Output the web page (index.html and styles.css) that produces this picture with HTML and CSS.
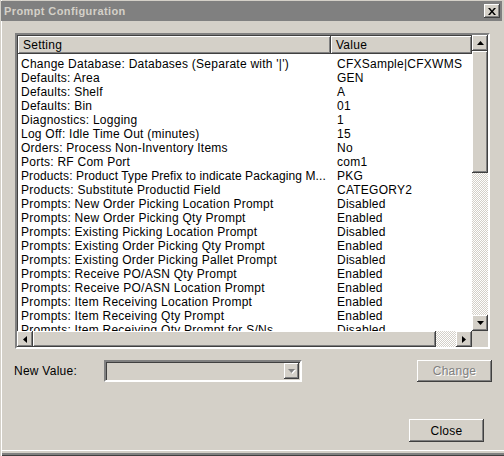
FILE: index.html
```html
<!DOCTYPE html>
<html>
<head>
<meta charset="utf-8">
<link rel="stylesheet" href="styles.css">
</head>
<body>
<div class="window">
  <div class="titlebar">
    <span class="title">Prompt Configuration</span>
    <span class="xbtn"><svg width="8" height="7" viewBox="0 0 8 7"><path d="M0 0h2l2 2.5L6 0h2L5 3.5 8 7H6L4 4.5 2 7H0l3-3.5z" fill="#000"/></svg></span>
  </div>
  <div class="body">
    <div class="listbox">
      <div class="list">
        <div class="header">
          <div class="hcell setting">Setting</div>
          <div class="hcell value">Value</div>
        </div>
        <div class="rows">
          <div class="row"><span class="c1">Change Database: Databases (Separate with '|')</span><span class="c2">CFXSample|CFXWMS</span></div>
          <div class="row"><span class="c1">Defaults: Area</span><span class="c2">GEN</span></div>
          <div class="row"><span class="c1">Defaults: Shelf</span><span class="c2">A</span></div>
          <div class="row"><span class="c1">Defaults: Bin</span><span class="c2">01</span></div>
          <div class="row"><span class="c1">Diagnostics: Logging</span><span class="c2">1</span></div>
          <div class="row"><span class="c1">Log Off: Idle Time Out (minutes)</span><span class="c2">15</span></div>
          <div class="row"><span class="c1">Orders: Process Non-Inventory Items</span><span class="c2">No</span></div>
          <div class="row"><span class="c1">Ports: RF Com Port</span><span class="c2">com1</span></div>
          <div class="row"><span class="c1 tight">Products: Product Type Prefix to indicate Packaging M...</span><span class="c2">PKG</span></div>
          <div class="row"><span class="c1">Products: Substitute Productid Field</span><span class="c2">CATEGORY2</span></div>
          <div class="row"><span class="c1">Prompts: New Order Picking Location Prompt</span><span class="c2">Disabled</span></div>
          <div class="row"><span class="c1">Prompts: New Order Picking Qty Prompt</span><span class="c2">Enabled</span></div>
          <div class="row"><span class="c1">Prompts: Existing Picking Location Prompt</span><span class="c2">Disabled</span></div>
          <div class="row"><span class="c1">Prompts: Existing Order Picking Qty Prompt</span><span class="c2">Enabled</span></div>
          <div class="row"><span class="c1">Prompts: Existing Order Picking Pallet Prompt</span><span class="c2">Disabled</span></div>
          <div class="row"><span class="c1">Prompts: Receive PO/ASN Qty Prompt</span><span class="c2">Enabled</span></div>
          <div class="row"><span class="c1">Prompts: Receive PO/ASN Location Prompt</span><span class="c2">Enabled</span></div>
          <div class="row"><span class="c1">Prompts: Item Receiving Location Prompt</span><span class="c2">Enabled</span></div>
          <div class="row"><span class="c1">Prompts: Item Receiving Qty Prompt</span><span class="c2">Enabled</span></div>
          <div class="row"><span class="c1">Prompts: Item Receiving Qty Prompt for S/Ns</span><span class="c2">Disabled</span></div>
        </div>
      </div>
      <div class="vscroll">
        <div class="sbtn"><svg width="7" height="4" viewBox="0 0 7 4"><path d="M3.5 0L7 4H0z" fill="#000"/></svg></div>
        <div class="vthumb"></div>
        <div class="track"></div>
        <div class="sbtn"><svg width="7" height="4" viewBox="0 0 7 4"><path d="M0 0h7L3.5 4z" fill="#000"/></svg></div>
      </div>
      <div class="hscroll">
        <div class="sbtn"><svg width="4" height="7" viewBox="0 0 4 7"><path d="M0 3.5L4 0v7z" fill="#000"/></svg></div>
        <div class="hthumb"></div>
        <div class="track"></div>
        <div class="sbtn"><svg width="4" height="7" viewBox="0 0 4 7"><path d="M0 0l4 3.5L0 7z" fill="#000"/></svg></div>
      </div>
      <div class="corner"></div>
    </div>
    <div class="form">
      <span class="label">New Value:</span>
      <div class="combo">
        <div class="combo-btn"><svg width="8" height="5" viewBox="0 0 8 5"><path d="M1 1h7L4.5 5z" fill="#fff"/><path d="M0 0h7L3.5 4z" fill="#808080"/></svg></div>
      </div>
      <button class="btn change" disabled>Change</button>
    </div>
    <div class="footer">
      <button class="btn close">Close</button>
    </div>
  </div>
</div>
</body>
</html>
```
FILE: styles.css
```css
* { box-sizing: border-box; }
html, body { margin: 0; padding: 0; }
body {
  font-family: "Liberation Sans", Arial, sans-serif;
  font-size: 12px;
  letter-spacing: 0.25px;
  color: #000;
  background: #d4d0c8;
}
.window {
  width: 504px;
  height: 456px;
  background: #d4d0c8;
  padding: 1px 0 0 1px;
  display: flex;
  flex-direction: column;
  box-shadow: inset 1px 0 #d4d0c8, inset 2px 0 #fff, inset 0 -1px #404040, inset 0 -3px #808080, inset 0 -5px #d4d0c8, inset 0 -6px #fff;
}
.titlebar {
  height: 20px;
  background: #808080;
  margin-right: 2px;
  display: flex;
  align-items: center;
  padding-left: 3px;
}
.title {
  font-weight: bold;
  font-size: 11px;
  letter-spacing: 0.4px;
  color: #d4d0c8;
  flex: 1;
}
.xbtn {
  width: 16px;
  height: 14px;
  margin-right: 2px;
  background: #d4d0c8;
  display: flex;
  align-items: center;
  justify-content: center;
  box-shadow: inset -1px -1px #404040, inset 1px 1px #fff, inset -2px -2px #808080;
}
.body {
  flex: 1;
  display: flex;
  flex-direction: column;
}
.listbox {
  margin: 12px 0 0 14px;
  width: 475px;
  height: 316px;
  border: 2px solid;
  border-color: #808080 #fff #fff #808080;
  box-shadow: inset 1px 1px #404040, inset -1px -1px #d4d0c8;
  display: grid;
  grid-template-columns: 455px 16px;
  grid-template-rows: 296px 16px;
  background: #fff;
}
.list {
  overflow: hidden;
  background: #fff;
  margin: 1px 0 0 1px;
}
.header {
  display: flex;
  height: 18px;
}
.hcell {
  background: #d4d0c8;
  height: 18px;
  line-height: 18px;
  padding-left: 5px;
  box-shadow: inset -1px -1px #404040, inset 1px 1px #fff, inset -2px -2px #808080;
}
.hcell.setting { width: 313px; }
.hcell.value { flex: 1; }
.rows { padding-top: 3px; }
.row {
  display: flex;
  height: 14px;
  line-height: 14px;
  white-space: nowrap;
}
.c1 { width: 313px; flex: none; padding-left: 3px; overflow: hidden; }
.c1.tight { letter-spacing: 0.1px; }
.c2 { padding-left: 6px; }
.sbtn {
  width: 16px;
  height: 16px;
  flex: none;
  background: #d4d0c8;
  display: flex;
  align-items: center;
  justify-content: center;
  box-shadow: inset -1px -1px #404040, inset 1px 1px #fff, inset -2px -2px #808080;
}
.vscroll {
  display: flex;
  flex-direction: column;
}
.vthumb {
  height: 122px;
  background: #d4d0c8;
  box-shadow: inset -1px -1px #404040, inset 1px 1px #fff, inset -2px -2px #808080;
}
.track {
  flex: 1;
  background: repeating-conic-gradient(#fff 0 25%, #d4d0c8 0 50%) 0 0 / 2px 2px;
}
.hscroll {
  display: flex;
}
.hthumb {
  width: 403px;
  background: #d4d0c8;
  box-shadow: inset -1px -1px #404040, inset 1px 1px #fff, inset -2px -2px #808080;
}
.corner { background: #d4d0c8; }
.form {
  display: flex;
  align-items: center;
  margin-top: 11px;
  padding-left: 13px;
  height: 22px;
}
.label { width: 90px; }
.combo {
  width: 198px;
  height: 22px;
  border: 2px solid;
  border-color: #808080 #fff #fff #808080;
  box-shadow: inset 1px 1px #404040, inset -1px -1px #d4d0c8;
  display: flex;
  justify-content: flex-end;
  align-items: center;
  padding-right: 1px;
}
.combo-btn {
  width: 15px;
  height: 16px;
  display: flex;
  align-items: center;
  justify-content: center;
  box-shadow: inset -1px -1px #404040, inset 1px 1px #fff, inset -2px -2px #808080;
}
.btn {
  font-family: "Liberation Sans", Arial, sans-serif;
  font-size: 12px;
  letter-spacing: 0.25px;
  background: #d4d0c8;
  border: none;
  padding: 0;
  color: #000;
  box-shadow: inset -1px -1px #404040, inset 1px 1px #fff, inset -2px -2px #808080;
}
.change {
  margin-left: auto;
  margin-right: 12px;
  width: 75px;
  height: 22px;
  color: #808080;
  text-shadow: 1px 1px #fff;
}
.footer {
  display: flex;
  justify-content: flex-end;
  margin-top: 37px;
  padding-right: 20px;
}
.close {
  width: 75px;
  height: 23px;
}
```
